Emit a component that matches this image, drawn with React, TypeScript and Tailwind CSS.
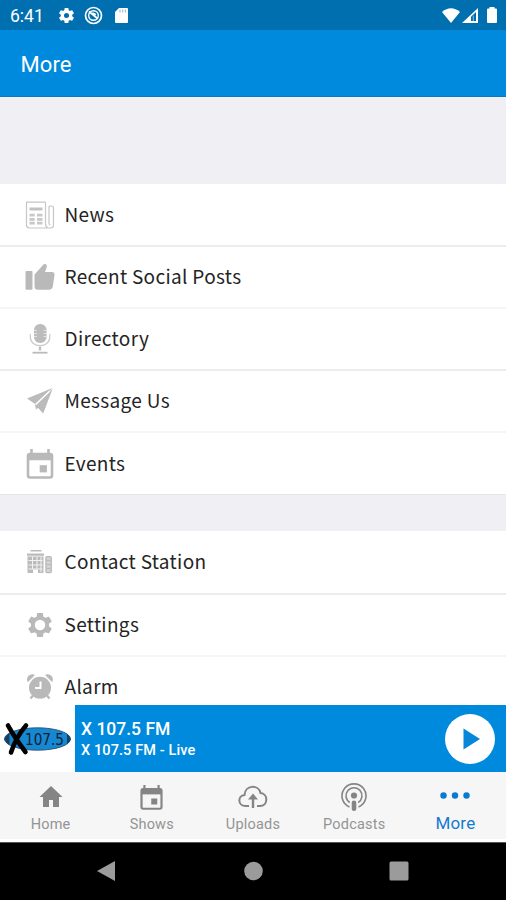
import type { ReactNode } from "react";

const GEAR =
  "M19.14 12.94c.04-.3.06-.61.06-.94 0-.32-.02-.64-.07-.94l2.03-1.58c.18-.14.23-.41.12-.61l-1.92-3.32c-.12-.22-.37-.29-.59-.22l-2.39.96c-.5-.38-1.03-.7-1.62-.94l-.36-2.54c-.04-.24-.24-.41-.48-.41h-3.84c-.24 0-.43.17-.47.41l-.36 2.54c-.59.24-1.13.57-1.62.94l-2.39-.96c-.22-.08-.47 0-.59.22L2.74 8.87c-.12.21-.08.47.12.61l2.03 1.58c-.05.3-.09.63-.09.94s.02.64.07.94l-2.03 1.58c-.18.14-.23.41-.12.61l1.92 3.32c.12.22.37.29.59.22l2.39-.96c.5.38 1.03.7 1.62.94l.36 2.54c.05.24.24.41.48.41h3.84c.24 0 .44-.17.47-.41l.36-2.54c.59-.24 1.13-.56 1.62-.94l2.39.96c.22.08.47 0 .59-.22l1.92-3.32c.12-.22.07-.47-.12-.61l-2.01-1.58z";

function NewsIcon() {
  return (
    <svg width="30" height="30" viewBox="0 0 30 30" fill="none" stroke="#c6c6c6" strokeWidth="1.2">
      <path d="M20.5 2.2H1.5V25q0 3 3 3h21q3 0 3-3V8q0-2-2-2H24M20.5 2.2V24q0 3 2.5 4M24 6v17.5q0 1.5 1.5 1.5" />
      <path d="M4.5 9h13" stroke="#c2c2c2" strokeWidth="3" />
      <path d="M4.5 15.2h5.2M12 15.2h5.5M4.5 19.3h5.2M12 19.3h5.5M4.5 23.2h5.2M12 23.2h5.5" stroke="#c8c8c8" strokeWidth="2.8" />
    </svg>
  );
}

function ThumbIcon() {
  return (
    <svg width="30" height="30" viewBox="0 0 30 30" fill="#b9b9b9">
      <rect x="0.5" y="9" width="7" height="18.7" rx="1" />
      <path d="M9.5 12.5 17.2 4q1-2 2.6-2 2.7 0 1.8 3.4L20 10h6.8q3 0 2.7 3l-1.6 11q-.5 3.7-4 3.7H13q-3.5 0-3.5-3.5z" />
    </svg>
  );
}

function MicIcon() {
  return (
    <svg width="30" height="32" viewBox="0 0 30 32" fill="none">
      <rect x="9" y="1" width="12.5" height="19" rx="6" fill="#bcbcbc" />
      <path d="M9 7.5h3M9 10.5h3M9 13.5h3M18.5 7.5h3M18.5 10.5h3M18.5 13.5h3" stroke="#e6e6e6" strokeWidth=".9" />
      <path d="M5.3 11v3c0 11.5 19.5 11.5 19.5 0v-3" stroke="#cacaca" strokeWidth="1.2" />
      <path d="M15 23.5v4" stroke="#c0c0c0" strokeWidth="2.4" />
      <path d="M7.5 29.7h15" stroke="#bbb" strokeWidth="1.8" />
    </svg>
  );
}

function PlaneIcon() {
  return (
    <svg width="30" height="30" viewBox="0 0 30 30" fill="#bbb">
      <path d="M27.5 2 2 12.5l8 5.5z" />
      <path d="M27.7 2.4 11.5 20.2 18.2 27.6z" />
      <path d="M25.5 5 9.8 18.5l1.2 5 3-2.5z" />
      <path d="M24.5 5.2 10.6 18.8" stroke="#fff" strokeWidth="1.2" />
    </svg>
  );
}

function CalendarIcon({ size, color }: { size: number; color: string }) {
  return (
    <svg width={size} height={size} viewBox="0 0 30 30" fill="none">
      <rect x="3" y="5" width="24" height="23.5" rx="2" stroke={color} strokeWidth="2.6" />
      <path d="M3 8.5h24" stroke={color} strokeWidth="5.5" />
      <path d="M6.5 0v5M23.5 0v5" stroke={color} strokeWidth="2.6" />
      <path d="M14.7 16.2h7.2v7.2h-7.2z" fill={color} />
    </svg>
  );
}

function BuildingIcon() {
  return (
    <svg width="30" height="30" viewBox="0 0 30 30">
      <path d="M5.5 3h11v1.6h-11zM2 6.5h17v2.2H2zM2.5 9.5h16V26H13v-3.5H8V26H2.5z" fill="#bbb" />
      <path d="M3.5 13.5h14M3.5 18h14M3.5 22h14M7.5 9.5V22M12 9.5V22M16 9.5V25" stroke="#f2f2f2" strokeWidth="1" />
      <rect x="21" y="9.8" width="5.2" height="15.6" rx="1" fill="#d8d8d8" stroke="#bbb" strokeWidth="1.5" />
      <path d="M21.5 13.5h4M21.5 17.5h4M21.5 21.5h4" stroke="#bbb" strokeWidth="1.3" />
    </svg>
  );
}

function GearIcon() {
  return (
    <svg width="30" height="30" viewBox="0 0 24 24">
      <path d={GEAR} fill="#b9b9b9" />
      <circle cx="12" cy="12" r="4.2" fill="#fff" />
    </svg>
  );
}

function AlarmIcon() {
  return (
    <svg width="30" height="30" viewBox="0 0 30 30" fill="none">
      <path d="M5.5 26.5 8 23.5M24.5 26.5 22 23.5" stroke="#b9b9b9" strokeWidth="2.2" />
      <circle cx="15" cy="15.8" r="11" fill="#b9b9b9" />
      <path d="M2.7 10.2C.3 5 5.2.5 10 3zM27.3 10.2C29.7 5 24.8.5 20 3z" fill="#b9b9b9" />
      <path d="M15.5 9.5V16H10" stroke="#fff" strokeWidth="2" />
    </svg>
  );
}

function Row({ icon, label, height = "h-[60px]" }: { icon: ReactNode; label: string; height?: string }) {
  return (
    <li className={`flex shrink-0 items-center bg-white pl-[24.5px] ${height}`}>
      <span className="flex w-[30px] justify-center">{icon}</span>
      <span className="-mt-0.5 ml-[10px] whitespace-nowrap text-[19px] leading-6 tracking-[0.33px] text-[#242424]">{label}</span>
    </li>
  );
}

function Divider({ soft }: { soft?: boolean }) {
  return <li role="separator" className={`h-0.5 shrink-0 ${soft ? "bg-[#f5f5f6]" : "bg-[#ececee]"}`} />;
}

function Tab({ icon, label, active }: { icon: ReactNode; label: string; active?: boolean }) {
  return (
    <div className={`flex flex-col items-center pt-[11px] ${active ? "text-[#1479cf]" : "text-[#949494]"}`}>
      <span className={`flex items-center justify-center ${active ? "h-[26px]" : "h-7"}`}>{icon}</span>
      <span className={`mt-1 leading-5 ${active ? "text-[17px] tracking-[0.2px]" : "text-[14.5px] tracking-[0.2px]"}`}>{label}</span>
    </div>
  );
}

function StatusBar() {
  return (
    <div className="flex h-[30px] shrink-0 items-center bg-[#006fb0] pl-[10px] pr-2 text-white">
      <span className="w-[47px] pt-0.5 text-[17.5px] leading-5">6:41</span>
      <svg width="19" height="19" viewBox="0 0 24 24">
        <path d={GEAR} fill="white" />
        <circle cx="12" cy="12" r="3.2" fill="#006fb0" />
      </svg>
      <svg className="ml-2" width="19" height="19" viewBox="0 0 19 19" fill="none" stroke="white">
        <circle cx="9.5" cy="9.5" r="8" strokeWidth="1.7" />
        <circle cx="9.5" cy="9.5" r="4.8" strokeWidth="1.4" />
        <path d="m5 5.5 8.5 7M7.8 8.2c1-1.3 3.3-.8 3.7 1" strokeWidth="1.7" />
      </svg>
      <svg className="ml-[11px]" width="15" height="17" viewBox="0 0 15 17">
        <path d="M5 1h8q1 0 1 1v13q0 1-1 1H2q-1 0-1-1V5z" fill="white" />
        <path d="M6 2.5v3M8.7 2.5v3M11.4 2.5v3" stroke="#9cc4de" strokeWidth="1.2" />
      </svg>
      <svg className="ml-auto" width="20" height="17" viewBox="0 0 20 17" fill="white">
        <path d="M1 5Q10-2.5 19 5l-9 11z" />
      </svg>
      <svg className="ml-px" width="17" height="17" viewBox="0 0 17 17">
        <path d="M0 16 16 1v15z" fill="white" />
        <path d="M9 9.8 14 5V14H9z" fill="#006fb0" />
        <path d="M11.3 8.5V14" stroke="#8fbbd8" strokeWidth="1" />
      </svg>
      <svg className="ml-[7px]" width="12" height="18" viewBox="0 0 12 18" fill="white">
        <path d="M3.5 1h5v1.5h1.5q1 0 1 1V16q0 1-1 1H2q-1 0-1-1V3.500q0-1 1-1h1.500z" />
      </svg>
    </div>
  );
}

export default function App() {
  return (
    <div className="flex h-[900px] w-[506px] flex-col overflow-hidden bg-[#efeff4] font-['Roboto',sans-serif]">
      <StatusBar />
      <header className="flex h-[67px] shrink-0 items-center border-b border-[#0879c4] bg-[#008add] pl-[20.5px] pt-1 text-white">
        <h1 className="text-[22px] leading-7 tracking-[0.1px]">More</h1>
      </header>

      <main className="flex h-[608px] shrink-0 flex-col overflow-hidden pt-[87px] font-['Noto_Sans_CJK_SC',sans-serif]">
        <ul className="flex shrink-0 flex-col border-b border-[#e6e6e9]">
          <Row icon={<NewsIcon />} label="News" height="h-[61px]" />
          <Divider />
          <Row icon={<ThumbIcon />} label="Recent Social Posts" />
          <Divider soft />
          <Row icon={<MicIcon />} label="Directory" />
          <Divider />
          <Row icon={<PlaneIcon />} label="Message Us" />
          <Divider soft />
          <Row icon={<CalendarIcon size={30} color="#b9b9b9" />} label="Events" height="h-[61px]" />
        </ul>
        <ul className="mt-9 flex shrink-0 flex-col">
          <Row icon={<BuildingIcon />} label="Contact Station" height="h-[62px]" />
          <Divider />
          <Row icon={<GearIcon />} label="Settings" />
          <Divider soft />
          <Row icon={<AlarmIcon />} label="Alarm" />
        </ul>
      </main>

      <section className="flex h-[67px] shrink-0 items-center bg-[#008add] pr-[11px] text-white">
        <div className="flex h-full w-[75px] items-center bg-white">
          <svg width="75" height="67" viewBox="0 0 75 67">
            <ellipse cx="37.5" cy="34" rx="33" ry="11.2" fill="#1688d3" stroke="#26516f" strokeWidth=".9" />
            <path d="M4.500 34q1.500-4 5-6v12q-3.500-2-5-6zM70.500 34q-.5-3-3.500-5v10q3-2 3.500-5z" fill="#17405f" />
            <g transform="translate(25 39.800) scale(.85 1)">
              <text fontFamily="DejaVu Sans" fontSize="16" fill="#10212d">107.5</text>
            </g>
            <path d="M8 20.500q7 13 17.500 26.500M26 20.500Q16 32 11 47.500" fill="none" stroke="black" strokeWidth="4.600" strokeLinecap="round" />
          </svg>
        </div>
        <div className="ml-[6px] flex flex-col pt-1 font-medium">
          <span className="text-[17.5px] leading-[21px]">X 107.5 FM</span>
          <span className="text-[14.5px] leading-[22px] tracking-[0.1px]">X 107.5 FM - Live</span>
        </div>
        <button className="ml-auto flex size-[50px] items-center justify-center rounded-full bg-white" aria-label="Play">
          <svg width="50" height="50" viewBox="0 0 50 50">
            <path d="M18.5 14.5 35 25 18.5 35.5z" fill="#0787d9" />
          </svg>
        </button>
      </section>

      <nav className="grid h-[70px] shrink-0 grid-cols-5 border-b-[3px] border-white bg-[#f6f6f7]">
        <Tab
          label="Home"
          icon={
            <svg width="26" height="26" viewBox="0 0 26 26" fill="#858585">
              <path d="M13 2 24.5 13H21v10h-6v-7h-4v7H5V13H1.5z" />
            </svg>
          }
        />
        <Tab label="Shows" icon={<CalendarIcon size={25} color="#858585" />} />
        <Tab
          label="Uploads"
          icon={
            <svg width="30" height="26" viewBox="0 0 30 26" fill="none" stroke="#858585" strokeWidth="2">
              <path d="M11 22H7.5C-.5 22-.5 11.5 6.5 11 7 1 20.5 0 22.5 9c7.5.2 8 12.5 0 13H19" />
              <path d="M15 24V12" strokeWidth="2.4" />
              <path d="m15 9.5 5 6H10z" fill="#858585" stroke="none" />
            </svg>
          }
        />
        <Tab
          label="Podcasts"
          icon={
            <svg width="28" height="28" viewBox="0 0 28 28" fill="none" stroke="#858585" strokeWidth="1.6">
              <path d="M9.5 24a12 12 0 1 1 9 0" />
              <path d="M9.8 19.5a8 8 0 1 1 8.4 0" />
              <circle cx="14" cy="12.5" r="3.1" fill="#858585" stroke="none" />
              <path d="M14 19.7v6" strokeWidth="4.6" strokeLinecap="round" />
            </svg>
          }
        />
        <Tab
          active
          label="More"
          icon={
            <svg width="30" height="8" viewBox="0 0 30 8" fill="#087bd0">
              <circle cx="3.5" cy="3.5" r="3.2" />
              <circle cx="15" cy="3.5" r="3.2" />
              <circle cx="26.5" cy="3.5" r="3.2" />
            </svg>
          }
        />
      </nav>

      <footer className="flex h-[58px] shrink-0 items-center justify-between border-t border-[#555] bg-black pb-px pl-24 pr-[97px]">
        <svg width="20" height="22" viewBox="0 0 20 22"><path d="M1 11 19 1v20z" fill="#9b9b9b" /></svg>
        <svg width="20" height="20" viewBox="0 0 20 20"><circle cx="10.500" cy="10" r="9.300" fill="#9b9b9b" /></svg>
        <svg width="20" height="20" viewBox="0 0 20 20"><rect x=".5" y=".5" width="19" height="19" rx="1.5" fill="#9b9b9b" /></svg>
      </footer>
    </div>
  );
}
